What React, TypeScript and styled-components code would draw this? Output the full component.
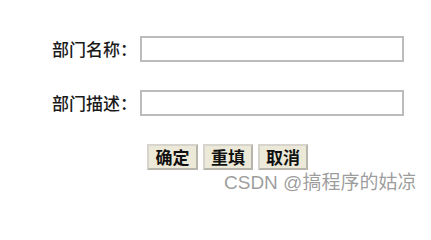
import styled, { createGlobalStyle } from 'styled-components';

const GlobalStyle = createGlobalStyle`
  html, body {
    margin: 0;
    padding: 0;
    background: #ffffff;
  }
  body {
    font-family: "Noto Sans CJK SC", "Liberation Sans", sans-serif;
  }
`;

const Page = styled.div`
  position: relative;
  width: 431px;
  height: 201px;
  overflow: hidden;
  background: #ffffff;
`;

const Form = styled.form`
  display: flex;
  flex-direction: column;
  gap: 28px;
  padding: 36px 0 0 52px;
`;

const Row = styled.div`
  display: flex;
  align-items: center;
  height: 26px;
`;

const Label = styled.label`
  width: 88px;
  font-size: 17px;
  font-weight: 500;
  color: #1a1a1a;
  line-height: 26px;
  white-space: nowrap;
`;

const TextInput = styled.input`
  box-sizing: border-box;
  width: 264px;
  height: 26px;
  margin: 0;
  padding: 0 4px;
  border: 2px solid #bcbcbc;
  background: #ffffff;
  outline: none;
`;

const Actions = styled.div`
  display: flex;
  gap: 5px;
  padding-left: 95px;
`;

const Button = styled.button<{ $w?: number }>`
  box-sizing: border-box;
  height: 26px;
  width: ${(p) => p.$w ?? 50}px;
  padding: 0;
  border: 2px solid #b8b6ac;
  border-top-color: #d6d4cc;
  border-left-color: #d6d4cc;
  background: #ece9d8;
  font-family: "Noto Sans CJK SC", sans-serif;
  font-size: 17px;
  font-weight: 700;
  line-height: 22px;
  color: #111;
  cursor: pointer;
`;

const Watermark = styled.div`
  position: absolute;
  left: 224px;
  top: 167px;
  font-family: "Liberation Sans", "Noto Sans CJK SC", sans-serif;
  font-size: 19px;
  color: rgba(140, 140, 140, 0.85);
  white-space: nowrap;
  pointer-events: none;
`;

export default function App() {
  return (
    <Page>
      <GlobalStyle />
      <Form onSubmit={(e) => e.preventDefault()}>
        <Row>
          <Label>部门名称：</Label>
          <TextInput type="text" />
        </Row>
        <Row>
          <Label>部门描述：</Label>
          <TextInput type="text" />
        </Row>
        <Actions>
          <Button type="submit" $w={51}>确定</Button>
          <Button type="reset">重填</Button>
          <Button type="button">取消</Button>
        </Actions>
      </Form>
      <Watermark>CSDN @搞程序的姑凉</Watermark>
    </Page>
  );
}
